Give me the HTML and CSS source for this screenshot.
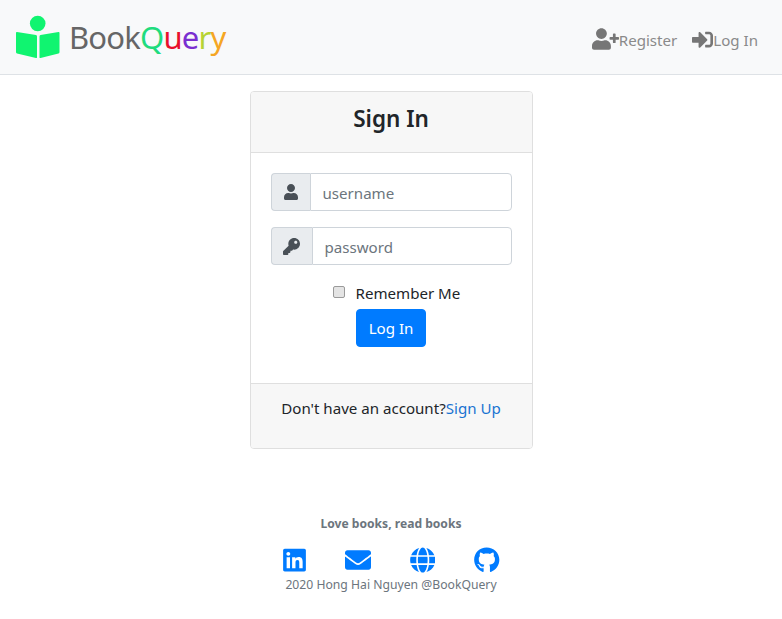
FILE: index.html
```html
<!DOCTYPE html>
<html lang="en">
<head>
<meta charset="utf-8">
<title>BookQuery</title>
<link rel="stylesheet" href="styles.css">
</head>
<body>
<nav class="navbar">
  <a class="brand" href="#">
    <svg class="brand-icon" viewBox="0 0 44 44" aria-hidden="true">
      <circle cx="21.700" cy="8.500" r="7.800"/>
      <path d="M1 17 L20 20 Q21 20.200 21 21.500 V42.200 Q21 43.300 20 43 L1 38.500 Q0 38.200 0 37 V18 Q0 16.800 1 17 Z"/>
      <path d="M42.500 17 L24.500 20 Q23.500 20.200 23.500 21.500 V42.200 Q23.500 43.300 24.500 43 L42.500 38.500 Q43.500 38.200 43.500 37 V18 Q43.500 16.800 42.500 17 Z"/>
    </svg>
    <span class="brand-text">Book<span class="c-q">Q</span><span class="c-u">u</span><span class="c-e">e</span><span class="c-r">r</span><span class="c-y">y</span></span>
  </a>
  <div class="nav-links">
    <a class="nav-link" href="#">
      <svg class="nav-user" viewBox="0 0 640 512" aria-hidden="true"><path d="M624 208h-64v-64c0-8.800-7.200-16-16-16h-32c-8.800 0-16 7.200-16 16v64h-64c-8.800 0-16 7.200-16 16v32c0 8.800 7.200 16 16 16h64v64c0 8.800 7.200 16 16 16h32c8.800 0 16-7.200 16-16v-64h64c8.800 0 16-7.200 16-16v-32c0-8.800-7.200-16-16-16zm-400 48c70.700 0 128-57.300 128-128S294.700 0 224 0 96 57.300 96 128s57.300 128 128 128zm89.600 32h-16.700c-22.200 10.200-46.900 16-72.900 16s-50.600-5.800-72.900-16h-16.700C60.200 288 0 348.200 0 422.400V464c0 26.500 21.500 48 48 48h352c26.500 0 48-21.500 48-48v-41.600c0-74.200-60.200-134.400-134.400-134.400z"/></svg>Register
    </a>
    <a class="nav-link" href="#">
      <svg class="nav-signin" viewBox="0 0 512 512" aria-hidden="true"><path d="M416 448h-84c-6.600 0-12-5.400-12-12v-40c0-6.600 5.400-12 12-12h84c17.700 0 32-14.300 32-32V160c0-17.700-14.300-32-32-32h-84c-6.600 0-12-5.400-12-12V76c0-6.600 5.400-12 12-12h84c53 0 96 43 96 96v192c0 53-43 96-96 96zm-47-201L201 79c-15-15-41-4.500-41 17v96H24c-13.300 0-24 10.700-24 24v96c0 13.300 10.700 24 24 24h136v96c0 21.500 26 32 41 17l168-168c9.300-9.400 9.300-24.600 0-34z"/></svg>Log In
    </a>
  </div>
</nav>

<main class="card">
  <header class="card-header"><h3 class="card-title">Sign In</h3></header>
  <form class="card-body">
    <div class="input-group">
      <span class="addon addon-user">
        <svg class="addon-icon" viewBox="0 0 448 512" aria-hidden="true"><path d="M224 256c70.700 0 128-57.300 128-128S294.700 0 224 0 96 57.300 96 128s57.300 128 128 128zm89.600 32h-16.700c-22.200 10.200-46.900 16-72.900 16s-50.600-5.800-72.900-16h-16.700C60.200 288 0 348.200 0 422.400V464c0 26.500 21.500 48 48 48h352c26.500 0 48-21.500 48-48v-41.600c0-74.200-60.200-134.400-134.400-134.400z"/></svg>
      </span>
      <input class="field" type="text" placeholder="username">
    </div>
    <div class="input-group">
      <span class="addon addon-key">
        <svg class="addon-icon" viewBox="0 0 512 512" aria-hidden="true"><path d="M512 176.001C512 273.203 433.202 352 336 352c-11.220 0-22.190-1.062-32.827-3.069l-24.012 27.014A23.999 23.999 0 0 1 261.223 384H224v40c0 13.255-10.745 24-24 24h-40v40c0 13.255-10.745 24-24 24H24c-13.255 0-24-10.745-24-24v-78.059c0-6.365 2.529-12.470 7.029-16.971l161.802-161.802C163.108 213.814 160 195.271 160 176 160 78.798 238.797.001 335.999 0 433.488-.001 512 78.511 512 176.001zM336 128c0 26.510 21.490 48 48 48s48-21.490 48-48-21.490-48-48-48-48 21.490-48 48z"/></svg>
      </span>
      <input class="field" type="password" placeholder="password">
    </div>
    <label class="remember"><span class="check"></span>Remember Me</label>
    <button class="btn" type="button">Log In</button>
  </form>
  <footer class="card-footer">Don't have an account?<a class="signup" href="#">Sign Up</a></footer>
</main>

<footer class="page-footer">
  <p class="tagline">Love books, read books</p>
  <div class="socials">
    <a href="#"><svg class="social s-linkedin" viewBox="0 0 448 512" aria-hidden="true"><path d="M416 32H31.900C14.300 32 0 46.500 0 64.300v383.400C0 465.500 14.300 480 31.900 480H416c17.600 0 32-14.500 32-32.300V64.300c0-17.800-14.400-32.300-32-32.300zM135.400 416H69V202.200h66.500V416zm-33.200-243c-21.300 0-38.500-17.300-38.500-38.500S80.900 96 102.200 96c21.200 0 38.500 17.300 38.500 38.500 0 21.300-17.200 38.500-38.500 38.500zm282.100 243h-66.400V312c0-24.800-.5-56.700-34.500-56.700-34.600 0-39.900 27-39.900 54.900V416h-66.400V202.200h63.700v29.200h.9c8.900-16.800 30.600-34.500 62.900-34.500 67.200 0 79.700 44.300 79.700 101.900V416z"/></svg></a>
    <a href="#"><svg class="social s-mail" viewBox="0 0 512 512" aria-hidden="true"><path d="M502.300 190.800c3.900-3.100 9.700-.2 9.700 4.700V400c0 26.500-21.500 48-48 48H48c-26.500 0-48-21.500-48-48V195.600c0-5 5.700-7.800 9.700-4.700 22.400 17.400 52.100 39.500 154.100 113.600 21.100 15.400 56.700 47.800 92.200 47.600 35.700.3 72-32.800 92.300-47.600 102-74.100 131.600-96.300 154-113.700zM256 320c23.200.4 56.600-29.200 73.400-41.400 132.700-96.300 142.800-104.700 173.400-128.700 5.800-4.500 9.200-11.500 9.200-18.900v-19c0-26.500-21.500-48-48-48H48C21.500 64 0 85.500 0 112v19c0 7.400 3.400 14.300 9.200 18.900 30.600 23.900 40.700 32.400 173.400 128.700 16.800 12.200 50.200 41.800 73.400 41.400z"/></svg></a>
    <a href="#"><svg class="social s-globe" viewBox="0 0 496 512" aria-hidden="true"><path d="M336.500 160C322 70.700 287.800 8 248 8s-74 62.700-88.500 152h177zM152 256c0 22.200 1.200 43.500 3.300 64h185.300c2.100-20.500 3.300-41.800 3.300-64s-1.200-43.500-3.300-64H155.300c-2.100 20.500-3.300 41.800-3.300 64zm324.700-96c-28.600-67.900-86.500-120.400-158-141.600 24.400 33.800 41.200 84.700 50 141.600h108zM177.200 18.400C105.800 39.600 47.800 92.100 19.300 160h108c8.700-56.900 25.500-107.800 49.900-141.600zM487.400 192H372.700c2.100 21 3.300 42.500 3.300 64s-1.200 43-3.300 64h114.600c5.500-20.500 8.600-41.800 8.600-64s-3.100-43.500-8.500-64zM120 256c0-21.500 1.200-43 3.300-64H8.600C3.200 212.500 0 233.800 0 256s3.200 43.500 8.600 64h114.600c-2-21-3.200-42.500-3.200-64zm39.500 96c14.500 89.300 48.700 152 88.500 152s74-62.700 88.500-152h-177zm159.300 141.600c71.400-21.200 129.400-73.700 158-141.600h-108c-8.800 56.900-25.600 107.800-50 141.600zM19.300 352c28.600 67.900 86.500 120.400 158 141.600-24.400-33.800-41.200-84.700-50-141.600h-108z"/></svg></a>
    <a href="#"><svg class="social s-github" viewBox="0 0 496 512" aria-hidden="true"><path d="M165.900 397.400c0 2-2.300 3.600-5.200 3.600-3.300 0-5.600-1.600-5.600-3.600 0-2 2.300-3.600 5.200-3.600 3-.3 5.600 1.300 5.600 3.600zm-31.100-4.500c-.7 2 1.300 4.300 4.300 4.900 2.600 1 5.600 0 6.200-2s-1.300-4.300-4.300-5.200c-2.600-.7-5.500.3-6.200 2.300zm44.200-1.700c-2.900.7-4.900 2.600-4.600 4.900.3 2 2.900 3.300 5.900 2.600 2.900-.7 4.900-2.600 4.600-4.600-.3-1.900-3-3.200-5.900-2.900zM244.800 8C106.100 8 0 113.300 0 252c0 110.900 69.800 205.800 169.500 239.200 12.800 2.300 17.300-5.600 17.300-12.100 0-6.200-.3-40.400-.3-61.400 0 0-70 15-84.700-29.800 0 0-11.400-29.100-27.800-36.600 0 0-22.900-15.700 1.600-15.400 0 0 24.900 2 38.600 25.800 21.900 38.600 58.600 27.500 72.900 20.900 2.300-16 8.800-27.100 16-33.700-55.900-6.200-112.300-14.300-112.300-110.500 0-27.500 7.600-41.300 23.600-58.900-2.600-6.500-11.100-33.300 2.600-67.900 20.900-6.500 69 27 69 27 20-5.600 41.500-8.500 62.800-8.500s42.800 2.900 62.800 8.500c0 0 48.100-33.600 69-27 13.700 34.700 5.200 61.400 2.600 67.900 16 17.700 25.800 31.500 25.800 58.900 0 96.500-58.900 104.200-114.800 110.500 9.200 7.900 17 22.900 17 46.400 0 33.700-.3 75.400-.3 83.600 0 6.500 4.600 14.400 17.300 12.100C428.200 457.800 496 362.900 496 252 496 113.300 383.500 8 244.800 8z"/></svg></a>
  </div>
  <p class="copyright">2020 Hong Hai Nguyen @BookQuery</p>
</footer>
</body>
</html>
```
FILE: styles.css
```css
* { box-sizing: border-box; }
body {
  margin: 0;
  font-family: "Noto Sans", "Open Sans", sans-serif;
  font-size: 15.1px;
  line-height: 24px;
  color: #212529;
  background: #fff;
}
a { text-decoration: none; }

.navbar {
  height: 75px;
  display: flex;
  align-items: center;
  justify-content: space-between;
  padding: 0 24px 0 16px;
  background: #f8f9fa;
  border-bottom: 1px solid #dee2e6;
}
.brand { display: flex; align-items: center; gap: 9px; }
.brand-icon { width: 44px; height: 44px; fill: #10f470; }
.brand-text { font-size: 31px; line-height: 40px; color: #666; letter-spacing: -0.8px; }
.c-q { color: #1fdc7e; }
.c-u { color: #e8102c; }
.c-e { color: #7a2fd0; }
.c-r { color: #b6d334; }
.c-y { color: #f5a623; }
.nav-links { display: flex; gap: 15px; padding-top: 6px; }
.nav-link { display: flex; align-items: center; color: #8a8a8a; }
.nav-user { width: 27px; height: 22px; margin-top: -2px; fill: #767676; }
.nav-signin { width: 21px; height: 21px; margin-top: -2px; fill: #767676; }

.card {
  width: 283px;
  margin: 16px auto 0;
  border: 1px solid #dfdfdf;
  border-radius: 4px;
  background: #fff;
}
.card-header {
  height: 61px;
  padding-bottom: 7px;
  display: flex;
  align-items: center;
  justify-content: center;
  background: #f7f7f7;
  border-bottom: 1px solid #dfdfdf;
  border-radius: 3px 3px 0 0;
}
.card-title { margin: 0; font-size: 22.5px; line-height: 30px; font-weight: 600; }
.card-body {
  height: 230px;
  padding: 20px;
  display: flex;
  flex-direction: column;
  align-items: center;
}
.input-group {
  width: 100%;
  height: 38px;
  display: flex;
  margin-bottom: 16px;
}
.addon {
  flex: none;
  display: flex;
  align-items: center;
  justify-content: center;
  background: #e9ecef;
  border: 1px solid #ced4da;
  border-right: 0;
  border-radius: 4px 0 0 4px;
}
.addon-user { width: 39px; }
.addon-key { width: 41px; }
.addon-icon { width: 17px; height: 17px; fill: #495057; }
.addon-user .addon-icon { width: 14px; height: 16px; }
.field {
  flex: 1;
  min-width: 0;
  padding: 2px 12px 0;
  font: inherit;
  color: #495057;
  background: #fff;
  border: 1px solid #ced4da;
  border-radius: 0 4px 4px 0;
  outline: none;
}
.field::placeholder { color: #6c757d; opacity: 1; }
.remember {
  align-self: flex-start;
  margin-left: 62px;
  display: flex;
  align-items: center;
  gap: 11px;
  height: 24px;
}
.check {
  width: 12px;
  height: 12px;
  margin-top: -2px;
  border: 1px solid #9a9a9a;
  border-radius: 2px;
  background: #e4e4e4;
}
.btn {
  margin-top: 4px;
  width: 70px;
  height: 38px;
  padding: 0;
  font: inherit;
  color: #fff;
  background: #007bff;
  border: 1px solid #007bff;
  border-radius: 4px;
}
.card-footer {
  height: 65px;
  padding-top: 12px;
  text-align: center;
  background: #f7f7f7;
  border-top: 1px solid #dfdfdf;
  border-radius: 0 0 3px 3px;
}
.signup { color: #1a73d1; }

.page-footer {
  margin-top: 65px;
  text-align: center;
  color: #6c757d;
}
.tagline { margin: 0; font-size: 12.1px; line-height: 20px; font-weight: 700; }
.socials {
  display: flex;
  justify-content: center;
  align-items: center;
  gap: 39px;
  height: 24px;
  margin-top: 14px;
}
.socials a { display: flex; }
.social { width: 25.500px; height: 26px; fill: #007bff; }
.s-linkedin { width: 23px; }
.s-mail { width: 26px; }
.copyright { margin: 3px 0 0; font-size: 12.2px; line-height: 20px; }
```
